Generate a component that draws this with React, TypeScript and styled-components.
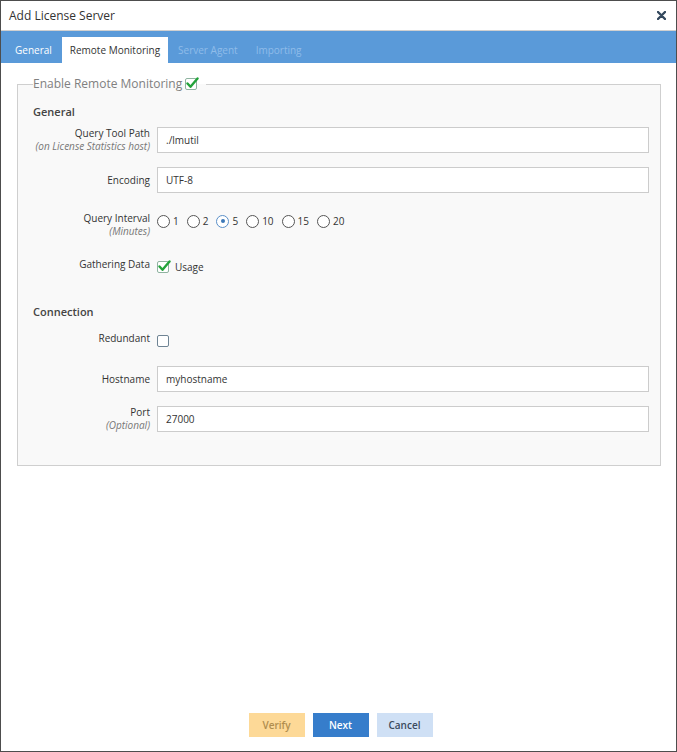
import styled, { createGlobalStyle } from "styled-components";

const GlobalStyle = createGlobalStyle`
  html, body {
    margin: 0;
    padding: 0;
    background: #fff;
  }
  body {
    font-family: "Open Sans", "Liberation Sans", sans-serif;
    color: #333;
  }
`;

const tabs = [
  { label: "General", state: "normal" },
  { label: "Remote Monitoring", state: "active" },
  { label: "Server Agent", state: "disabled" },
  { label: "Importing", state: "disabled" },
];

const intervals = [1, 2, 5, 10, 15, 20];

const CheckIcon = ({ checked }: { checked: boolean }) => (
  <svg width="15" height="14" viewBox="0 0 15 14">
    <rect
      x="0.5"
      y="1.5"
      width="11"
      height="11"
      rx="1.5"
      fill="#fff"
      stroke={checked ? "#8fb3a0" : "#6f8494"}
    />
    {checked && (
      <path
        d="M2.5 6.5 L5.5 9.8 L12.5 1.5"
        fill="none"
        stroke="#22a33a"
        strokeWidth="2.4"
        strokeLinecap="round"
        strokeLinejoin="round"
      />
    )}
  </svg>
);

const CloseIcon = () => (
  <svg width="9" height="9" viewBox="0 0 9 9">
    <path
      d="M1 1 L8 8 M8 1 L1 8"
      stroke="#34495e"
      strokeWidth="2.4"
      strokeLinecap="round"
    />
  </svg>
);

const App = () => {
  return (
    <>
      <GlobalStyle />
      <Dialog>
        <Header>
          <Title>Add License Server</Title>
          <CloseIcon />
        </Header>
        <TabBar>
          {tabs.map((t) => (
            <Tab key={t.label} state={t.state}>
              {t.label}
            </Tab>
          ))}
        </TabBar>
        <Body>
          <Fieldset>
            <Legend>
              Enable Remote Monitoring
              <CheckIcon checked />
            </Legend>
            <Heading top={11}>General</Heading>
            <Row top={7}>
              <Label>
                Query Tool Path
                <Hint>(on License Statistics host)</Hint>
              </Label>
              <Input defaultValue="./lmutil" />
            </Row>
            <Row top={14}>
              <Label center>Encoding</Label>
              <Input defaultValue="UTF-8" />
            </Row>
            <Row top={19}>
              <Label>
                Query Interval
                <Hint>(Minutes)</Hint>
              </Label>
              <Options>
                {intervals.map((n) => (
                  <RadioItem key={n}>
                    <Radio selected={n === 5} />
                    {n}
                  </RadioItem>
                ))}
              </Options>
            </Row>
            <Row top={20}>
              <Label>Gathering Data</Label>
              <Options>
                <RadioItem>
                  <CheckIcon checked />
                  Usage
                </RadioItem>
              </Options>
            </Row>
            <Heading top={30}>Connection</Heading>
            <Row top={12}>
              <Label>Redundant</Label>
              <Options>
                <CheckIcon checked={false} />
              </Options>
            </Row>
            <Row top={18}>
              <Label center>Hostname</Label>
              <Input defaultValue="myhostname" />
            </Row>
            <Row top={14}>
              <Label>
                Port
                <Hint>(Optional)</Hint>
              </Label>
              <Input defaultValue="27000" />
            </Row>
          </Fieldset>
        </Body>
        <Footer>
          <Button kind="verify">Verify</Button>
          <Button kind="next">Next</Button>
          <Button kind="cancel">Cancel</Button>
        </Footer>
      </Dialog>
    </>
  );
};

const Dialog = styled.div`
  box-sizing: border-box;
  width: 677px;
  height: 752px;
  border: 1px solid #4d4d4d;
  display: flex;
  flex-direction: column;
  background: #fff;
`;
const Header = styled.div`
  height: 29px;
  display: flex;
  align-items: center;
  justify-content: space-between;
  padding: 0 10px 0 8px;
  border-bottom: 1px solid #d0d0d0;
`;
const Title = styled.div`
  font-size: 12px;
  color: #333;
`;
const TabBar = styled.div`
  height: 32px;
  background: #5a9ad9;
  display: flex;
  align-items: flex-end;
  padding-left: 6px;
`;
const Tab = styled.div<{ state: string }>`
  height: 26px;
  line-height: 26px;
  padding: 0 8px;
  margin-right: 2px;
  font-size: 10px;
  color: ${(p) =>
    p.state === "active" ? "#333" : p.state === "disabled" ? "#8fbce9" : "#fff"};
  background: ${(p) => (p.state === "active" ? "#fff" : "transparent")};
`;
const Body = styled.div`
  flex: 1;
  padding: 12px 15px 0 16px;
`;
const Fieldset = styled.fieldset`
  margin: 0;
  padding: 0 11px 33px 15px;
  border: 1px solid #cfcfcf;
  background: #f9f9f9;
  min-width: 0;
`;
const Legend = styled.legend`
  display: flex;
  align-items: center;
  gap: 3px;
  margin-left: 0;
  padding: 0 6px 0 0;
  font-size: 12px;
  color: #808080;
  line-height: 18px;
`;
const Heading = styled.div<{ top?: number }>`
  margin-top: ${(p) => p.top ?? 9}px;
  font-size: 11px;
  font-weight: 600;
  color: #444;
  line-height: 16px;
`;
const Row = styled.div<{ top: number }>`
  display: grid;
  grid-template-columns: 117px 1fr;
  column-gap: 7px;
  align-items: start;
  margin-top: ${(p) => p.top}px;
`;
const Label = styled.div<{ center?: boolean }>`
  text-align: right;
  font-size: 10px;
  line-height: 13px;
  color: #333;
  display: flex;
  flex-direction: column;
  align-self: ${(p) => (p.center ? "center" : "start")};
`;
const Hint = styled.span`
  font-size: 10px;
  font-style: italic;
  color: #777;
`;
const Input = styled.input`
  box-sizing: border-box;
  height: 26px;
  width: 100%;
  border: 1px solid #cccccc;
  background: #fff;
  padding: 0 8px;
  font-family: inherit;
  font-size: 10px;
  color: #333;
  outline: none;
`;
const Options = styled.div`
  display: flex;
  align-items: center;
  gap: 8px;
  height: 14px;
  margin-top: 2px;
`;
const RadioItem = styled.div`
  display: flex;
  align-items: center;
  gap: 3px;
  font-size: 10px;
  color: #333;
`;
const Radio = styled.span<{ selected?: boolean }>`
  box-sizing: border-box;
  width: 13px;
  height: 13px;
  border-radius: 50%;
  border: 1px solid ${(p) => (p.selected ? "#5a8fc8" : "#555")};
  background: #fff;
  display: flex;
  align-items: center;
  justify-content: center;
  &::after {
    content: "";
    width: 4px;
    height: 4px;
    border-radius: 50%;
    background: ${(p) => (p.selected ? "#3c78b8" : "transparent")};
  }
`;
const Footer = styled.div`
  display: flex;
  justify-content: center;
  gap: 8px;
  padding: 0 0 14px 0;
  margin-left: 4px;
`;
const Button = styled.button<{ kind: string }>`
  width: 56px;
  height: 24px;
  border: none;
  font-family: inherit;
  font-size: 10px;
  font-weight: 600;
  padding: 0;
  background: ${(p) =>
    p.kind === "verify" ? "#fdd997" : p.kind === "next" ? "#367dcb" : "#cfe0f5"};
  color: ${(p) =>
    p.kind === "verify" ? "#b08d4e" : p.kind === "next" ? "#fff" : "#3b4a5e"};
`;

export default App;
